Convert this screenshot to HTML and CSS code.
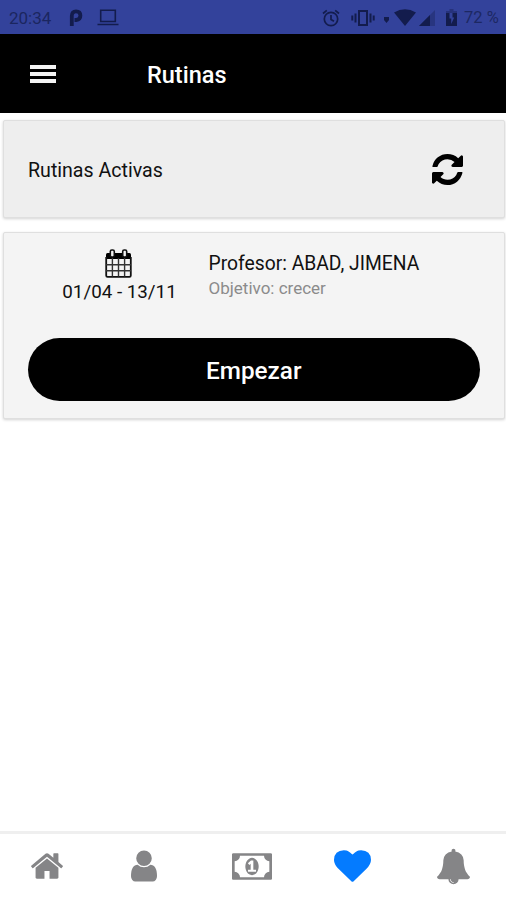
FILE: index.html
```html
<!DOCTYPE html>
<html lang="es">
<head>
<meta charset="utf-8">
<title>Rutinas</title>
<link rel="stylesheet" href="styles.css">
</head>
<body>
<div class="status">
  <span class="clock">20:34</span>
  <svg class="s-park" viewBox="0 0 14 18"><path d="M2.800 17V7Q2.800 2.300 7 2.300q4.400 0 4.400 4.200T7.300 11H5.500" fill="none" stroke="currentColor" stroke-width="3.800"/></svg>
  <svg class="s-laptop" viewBox="0 0 22 17"><path d="M3.700 1.200h14.600v11.300H3.700zM.5 15.500h21" fill="none" stroke="currentColor" stroke-width="1.600"/></svg>
  <svg class="s-alarm" viewBox="0 0 18 18"><g fill="none" stroke="currentColor" stroke-width="1.700"><circle cx="9" cy="10" r="6.700"/><path d="M9 6v4.500l3 1.800M1 4.500l3.800-3.200M17 4.500l-3.800-3.200"/></g></svg>
  <svg class="s-vib" viewBox="0 0 24 18"><g fill="none" stroke="currentColor" stroke-width="2"><path d="M8 2h8v14H8zM4.500 4.500v9M19.500 4.500v9M1.300 6.500v5M22.700 6.500v5"/></g></svg>
  <svg class="s-dot" viewBox="0 0 5 7"><path d="M0 1h5v3L2.500 7 0 4z" fill="currentColor"/></svg>
  <svg class="s-wifi" viewBox="0 0 22 17"><path d="M0 3.500Q11-3 22 3.500L11 17z" fill="currentColor"/></svg>
  <svg class="s-cell" viewBox="0 0 16 16"><path d="M0 16L16 0v16z" fill="currentColor" opacity=".35"/><path d="M0 16L11 5v11z" fill="currentColor"/></svg>
  <svg class="s-bat" viewBox="0 0 11 17"><path d="M3.500 0h4v2H11v2H0V2h3.500z" fill="currentColor" opacity=".4"/><path d="M0 4h3.500v5.500h1.700V15l3-6.500H6.500V4H11v13H0z" fill="currentColor"/></svg>
  <span class="level">72 %</span>
</div>
<header class="bar">
  <span class="burger"><i></i><i></i><i></i></span>
  <h1>Rutinas</h1>
</header>
<main>
  <section class="card head">
    <span>Rutinas Activas</span>
    <svg class="refresh" viewBox="128 128 1536 1536"><path d="M1639 1056q0 5-1 7-64 268-268 434.500t-478 166.500q-146 0-282.500-55t-243.500-157l-129 129q-19 19-45 19t-45-19-19-45v-448q0-26 19-45t45-19h448q26 0 45 19t19 45-19 45l-137 137q71 66 161 102t187 36q134 0 250-65t186-179q11-17 53-117 8-23 30-23h192q13 0 22.500 9.500t9.500 22.500zm25-800v448q0 26-19 45t-45 19h-448q-26 0-45-19t-19-45 19-45l138-138q-148-137-349-137-134 0-250 65t-186 179q-11 17-53 117-8 23-30 23h-199q-13 0-22.500-9.500t-9.500-22.500v-7q65-268 270-434.500t480-166.500q146 0 284 55.500t245 156.500l130-129q19-19 45-19t45 19 19 45z"/></svg>
  </section>
  <section class="card routine">
    <div class="info">
      <div class="dates">
        <svg class="cal" viewBox="0 0 27 29"><path d="M2.500 4h22q1.500 0 1.500 1.500V10H1V5.500Q1 4 2.500 4z"/><path d="M1.200 8v18.500q0 1.300 1.300 1.300h22q1.300 0 1.300-1.300V8" fill="none" stroke="#111" stroke-width="1.800"/><path d="M7.400 9v18.500M13.500 9v18.500M19.600 9v18.500M1 15.800h25M1 21.700h25" stroke="#333" stroke-width="1.400"/><rect x="5.300" y="1" width="4" height="7" rx="1.500" fill="#f4f4f4" stroke="#111" stroke-width="1.600"/><rect x="17.700" y="1" width="4" height="7" rx="1.500" fill="#f4f4f4" stroke="#111" stroke-width="1.600"/></svg>
        <span>01/04 - 13/11</span>
      </div>
      <div class="details">
        <div class="prof">Profesor: ABAD, JIMENA</div>
        <div class="goal">Objetivo: crecer</div>
      </div>
    </div>
    <button class="start">Empezar</button>
  </section>
</main>
<nav class="tabs">
  <svg class="t-home" viewBox="89 256 1614 1280"><path d="M1472 992v480q0 26-19 45t-45 19h-384v-384h-256v384h-384q-26 0-45-19t-19-45v-480q0-1 .5-3t.5-3l575-474 575 474q1 2 1 6zm223-69l-62 74q-8 9-21 11h-3q-13 0-21-7l-692-577-692 577q-12 8-24 7-13-2-21-11l-62-74q-8-10-7-23.500t11-21.500l719-599q32-26 76-26t76 26l244 204v-195q0-14 9-23t23-9h192q14 0 23 9t9 23v408l219 182q10 8 11 21.500t-7 23.500z"/></svg>
  <svg class="t-user" viewBox="256 128 1280 1536"><path d="M1536 1399q0 109-62.500 187t-150.500 78h-854q-88 0-150.500-78t-62.500-187q0-85 8.500-160.500t31.500-152 58.500-131 94-89 134.500-34.500q131 128 313 128t313-128q76 0 134.500 34.500t94 89 58.500 131 31.500 152 8.500 160.500zm-256-887q0 159-112.500 271.500t-271.500 112.500-271.500-112.500-112.500-271.500 112.500-271.500 271.500-112.500 271.500 112.500 112.500 271.500z"/></svg>
  <svg class="t-money" viewBox="0 256 1920 1280"><path fill-rule="evenodd" d="M768 1152h384v-96h-128v-448h-114l-148 137 77 80q42-37 55-57h2v288h-128v96zm512-256q0 70-21 142t-59.500 134-101.500 101-138 39-138-39-101.500-101-59.500-134-21-142 21-142 59.500-134 101.500-101 138-39 138 39 101.500 101 59.500 134 21 142zm512 256v-512q-106 0-181-75t-75-181h-1152q0 106-75 181t-181 75v512q106 0 181 75t75 181h1152q0-106 75-181t181-75zm128-832v1152q0 26-19 45t-45 19h-1792q-26 0-45-19t-19-45v-1152q0-26 19-45t45-19h1792q26 0 45 19t19 45z"/></svg>
  <svg class="t-heart" viewBox="0 128 1792 1536"><path d="M896 1664q-26 0-44-18l-624-602q-10-8-27.500-26t-55.500-65.500-68-97.500-53.500-121-23.500-138q0-220 127-344t351-124q62 0 126.500 21.500t120 58 95.500 68.500 76 68q36-36 76-68t95.500-68.500 120-58 126.500-21.500q224 0 351 124t127 344q0 221-229 450l-623 600q-18 18-44 18z"/></svg>
  <svg class="t-bell" viewBox="64 0 1664 1792"><path d="M912 1696q0-16-16-16-59 0-101.500-42.500t-42.500-101.500q0-16-16-16t-16 16q0 73 51.500 124.500t124.500 51.500q16 0 16-16zm816-288q0 52-38 90t-90 38h-448q0 106-75 181t-181 75-181-75-75-181h-448q-52 0-90-38t-38-90q50-42 91-88t85-119.500 74.500-158.500 50-206 19.500-260q0-152 117-282.500t307-158.500q-8-19-8-39 0-40 28-68t68-28 68 28 28 68q0 20-8 39 190 28 307 158.500t117 282.500q0 139 19.500 260t50 206 74.500 158.500 85 119.500 91 88z"/></svg>
</nav>
</body>
</html>
```
FILE: styles.css
```css
* { box-sizing: border-box; }
body { margin: 0; height: 900px; display: flex; flex-direction: column; background: #fff; font-family: Roboto, "Liberation Sans", sans-serif; color: #111; overflow: hidden; }
svg { display: block; flex: none; }
.status { height: 34px; background: #33429b; color: #131c4d; display: flex; align-items: center; padding: 1px 8px 0 9px; font-size: 17px; white-space: nowrap; }
.clock { width: 60px; color: #1b2660; }
.s-park { width: 14px; height: 18px; }
.s-laptop { width: 22px; height: 17px; margin-left: 14px; }
.s-alarm { width: 18px; height: 18px; margin-left: auto; }
.s-vib { width: 24px; height: 18px; margin-left: 11px; }
.s-dot { width: 5px; height: 7px; margin: 3px 0 0 9px; }
.s-wifi { width: 22px; height: 17px; margin-left: 5px; }
.s-cell { width: 16px; height: 16px; margin-left: 3px; }
.s-bat { width: 11px; height: 17px; margin-left: 11px; }
.level { width: 34px; margin-left: 7px; color: #1d2863; font-size: 16.500px; }
.bar { height: 79px; background: #000; color: #fff; display: flex; align-items: center; padding: 1px 0 0 30px; }
.burger { width: 26px; height: 18px; display: flex; flex-direction: column; justify-content: space-between; }
.burger i { height: 4px; background: #f4f4f4; }
h1 { margin: 2px 0 0 91px; font-size: 23.500px; line-height: 28px; font-weight: 500; }
main { flex: 1; padding: 7px 1px 0 3px; }
.card { border: 1px solid #dfdfdf; border-radius: 2px; box-shadow: 0 1px 3px rgba(0,0,0,.18); }
.head { height: 98px; background: #eee; display: flex; align-items: center; justify-content: space-between; padding: 0 41px 0 24px; font-size: 19.600px; }
.head span { padding-top: 2px; }
.refresh { width: 31px; height: 31px; }
.routine { height: 187px; margin-top: 14px; background: #f4f4f4; padding: 16px 24px 0 23.500px; }
.info { display: flex; height: 89px; }
.dates { width: 181px; padding-left: 3px; display: flex; flex-direction: column; align-items: center; font-size: 18.800px; line-height: 24px; }
.cal { width: 27px; height: 29px; margin: 0 3px 2px 0; }
.details { padding-top: 2px; font-size: 19.300px; line-height: 25px; }
.goal { font-size: 17px; color: #8b8b8b; }
.start { display: block; width: 100%; height: 63px; border: 0; border-radius: 32px; background: #000; color: #fff; font: 500 24.300px Roboto, sans-serif; padding: 2px 0 0; }
.tabs { height: 69px; border-top: 3px solid #efefef; display: flex; align-items: center; padding: 0 0 2px 31px; fill: #858587; }
.t-home { width: 32px; height: 26px; }
.t-user { width: 26px; height: 32px; margin-left: 68px; }
.t-money { width: 40px; height: 27px; margin-left: 75px; }
.t-heart { width: 37px; height: 32px; margin-left: 61.500px; fill: #047bff; }
.t-bell { width: 33px; height: 37px; margin-left: 66.500px; }
```
